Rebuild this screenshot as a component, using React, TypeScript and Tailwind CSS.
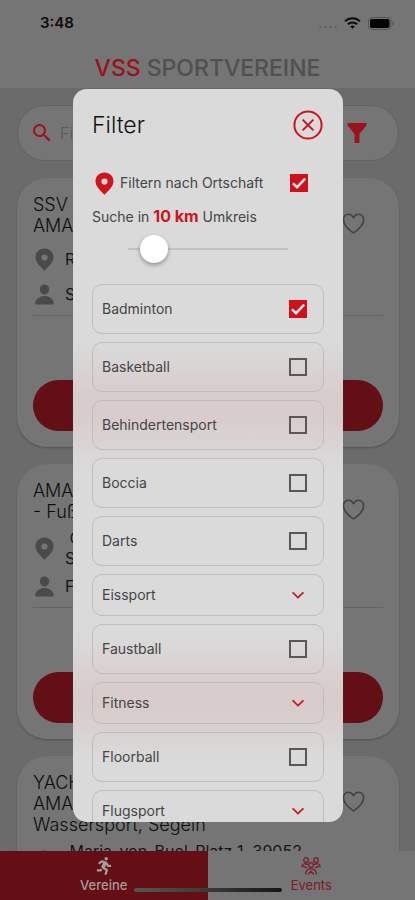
import React, { useState } from "react";
import { MdSearch } from "react-icons/md";
import { IoPerson, IoHeartOutline } from "react-icons/io5";
import { FaRunning } from "react-icons/fa";

type Club = {
  title: string[];
  address: string[];
  person: string;
};

type Sport = { name: string; group?: boolean; checked?: boolean };

const clubs: Club[] = [
  { title: ["SSV", "AMAT"], address: ["R"], person: "S" },
  { title: ["AMAT", "- Fuß"], address: ["\u00a0G", "S"], person: "F" },
  {
    title: ["YACH", "AMAT", "Wassersport, Segeln"],
    address: ["\u00a0Maria-von-Buol-Platz 1, 39052", "K"],
    person: "P",
  },
];

const sports: Sport[] = [
  { name: "Badminton", checked: true },
  { name: "Basketball" },
  { name: "Behindertensport" },
  { name: "Boccia" },
  { name: "Darts" },
  { name: "Eissport", group: true },
  { name: "Faustball" },
  { name: "Fitness", group: true },
  { name: "Floorball" },
  { name: "Flugsport", group: true },
];

function Pin({ className }: { className: string }) {
  return (
    <svg viewBox="0 0 19 23" className={`h-[23px] w-[19px] shrink-0 ${className}`}>
      <path
        fillRule="evenodd"
        d="M9.5 0.5 C4.4 0.5 0.5 4.3 0.5 9.3 C0.5 14.2 4.8 18.2 9.5 22.7 C14.2 18.2 18.5 14.2 18.5 9.3 C18.5 4.3 14.6 0.5 9.5 0.5 Z M9.5 6.4 A3.1 3.1 0 1 1 9.5 12.6 A3.1 3.1 0 1 1 9.5 6.4 Z"
      />
    </svg>
  );
}

function Tick({ id, defaultChecked }: { id: string; defaultChecked?: boolean }) {
  return (
    <span className="grid size-[18px] shrink-0">
      <input
        id={id}
        type="checkbox"
        defaultChecked={defaultChecked}
        className="peer col-start-1 row-start-1 size-[18px] appearance-none border-2 border-[#5a5757] checked:border-[#cf111b] checked:bg-[#cf111b]"
      />
      <svg
        viewBox="0 0 18 18"
        className="pointer-events-none invisible col-start-1 row-start-1 size-[18px] peer-checked:visible"
        fill="none"
        stroke="#f4e9e9"
        strokeWidth="2.4"
      >
        <path d="M3 9.4 L7 13.2 L15.2 4.6" />
      </svg>
    </span>
  );
}

function StatusBar() {
  return (
    <div className="flex h-[46px] items-center justify-between pr-5 pl-10 text-[#0c0c0c]">
      <span className="text-[15px] font-semibold">3:48</span>
      <div className="flex items-center">
        <svg viewBox="0 0 20 4" className="mt-2 h-1 w-5 fill-[#5e5e5e]">
          <circle cx="2.5" cy="2" r="1.2" />
          <circle cx="7.5" cy="2" r="1.2" />
          <circle cx="12.5" cy="2" r="1.2" />
          <circle cx="17.5" cy="2" r="1.2" />
        </svg>
        <svg viewBox="0 0 17 12" className="ml-1.5 h-3 w-[17px]" fill="none" stroke="currentColor" strokeWidth="2">
          <path d="M1 4.4 C5.2 0.3 11.8 0.3 16 4.4" />
          <path d="M3.8 7.3 C6.5 4.8 10.5 4.8 13.2 7.3" />
          <path d="M8.5 11.8 L6.2 9.4 C7.5 8.2 9.5 8.2 10.8 9.4 Z" fill="currentColor" stroke="none" />
        </svg>
        <svg viewBox="0 0 27 13" className="ml-[7px] h-[13px] w-[27px]">
          <rect x="0.5" y="0.5" width="22.5" height="12" rx="3.5" fill="none" stroke="#555" />
          <rect x="2" y="2" width="19.5" height="9" rx="2" fill="#050505" />
          <path d="M24.5 4.2 C26.6 5 26.6 8 24.5 8.8 Z" fill="#555" />
        </svg>
      </div>
    </div>
  );
}

function ClubCard({ club }: { club: Club }) {
  return (
    <article className="shrink-0 rounded-[30px] bg-[#757575] p-4 shadow-[0_1px_2px_rgba(0,0,0,0.25)]">
      <div className="flex items-start justify-between">
        <h2 className="text-lg leading-[21px] font-light whitespace-nowrap text-[#0d0d0d]">
          {club.title.map((line) => (
            <span key={line} className="block">
              {line}
            </span>
          ))}
        </h2>
        <button type="button" aria-label="Favorit" className="mt-4 mr-4 h-[26px]">
          <IoHeartOutline className="size-[27px] text-[#434343]" />
        </button>
      </div>
      <div className="mt-1.5 flex min-h-[34px] items-center text-base leading-5 text-[#151515]">
        <Pin className="ml-0.5 fill-[#4a4a4a]" />
        <p className="ml-[11px] whitespace-nowrap">
          {club.address.map((line) => (
            <span key={line} className="block">
              {line}
            </span>
          ))}
        </p>
      </div>
      <div className="mt-1.5 flex h-6 items-center text-base leading-5 text-[#151515]">
        <IoPerson className="size-[23px] shrink-0 text-[#4a4a4a]" />
        <p className="ml-[9px]">{club.person}</p>
      </div>
      <hr className="mt-[9px] border-[#646464]" />
      <button
        type="button"
        aria-label="Details"
        className="mt-16 block h-[51px] w-full rounded-full bg-[#640f16]"
      />
    </article>
  );
}

function SportRow({ sport }: { sport: Sport }) {
  const frame = "flex w-full shrink-0 items-center justify-between rounded-[10px] border border-[#bdbdbd] pl-[9px] pr-4";
  if (sport.group) {
    return (
      <button type="button" className={`${frame} h-[42px]`}>
        <span>{sport.name}</span>
        <svg viewBox="0 0 18 18" className="size-[18px]" fill="none" stroke="#d0131d" strokeWidth="1.8">
          <path d="M3.6 6.4 L9 11.6 L14.4 6.4" />
        </svg>
      </button>
    );
  }
  return (
    <label htmlFor={sport.name} className={`${frame} h-[50px]`}>
      <span>{sport.name}</span>
      <Tick id={sport.name} defaultChecked={sport.checked} />
    </label>
  );
}

function FilterDialog() {
  const [radius, setRadius] = useState(9);
  return (
    <div
      role="dialog"
      aria-label="Filter"
      className="flex h-full w-full flex-col overflow-hidden rounded-[14px] bg-[#dadada] bg-[linear-gradient(to_bottom,#dadada_255px,#d8cdcd_303px,#d8cbcb_325px,#dadada_378px,#dadada_548px,#d8cdcd_596px,#d8cbcb_618px,#dadada_670px)] px-[19px] pt-[21px] text-sm text-[#454545]"
    >
      <div className="flex h-[30px] shrink-0 items-center justify-between pr-px">
        <h2 className="text-[23px] leading-[30px] font-light text-[#111]">Filter</h2>
        <button type="button" aria-label="Schließen">
          <svg viewBox="0 0 30 30" className="size-[30px]" fill="none" stroke="#d0131d" strokeWidth="2">
            <circle cx="15" cy="15" r="13.6" />
            <path d="M9.6 9.6 L20.4 20.4 M20.4 9.6 L9.6 20.4" />
          </svg>
        </button>
      </div>
      <label htmlFor="ort" className="mt-8 flex h-[22px] shrink-0 items-center pr-4 pl-[3px]">
        <Pin className="fill-[#d0131d]" />
        <span className="ml-[6px] flex-1 whitespace-nowrap">Filtern nach Ortschaft</span>
        <Tick id="ort" defaultChecked />
      </label>
      <label htmlFor="radius" className="mt-3 shrink-0 leading-5 whitespace-nowrap">
        Suche in <strong className="text-base leading-5 font-bold text-[#d0131d]">10 km</strong> Umkreis
      </label>
      <input
        id="radius"
        type="range"
        min={0}
        max={100}
        value={radius}
        onChange={(e) => setRadius(Number(e.target.value))}
        className="mx-9 mt-2 h-7 shrink-0 appearance-none bg-transparent [&::-webkit-slider-runnable-track]:h-0.5 [&::-webkit-slider-runnable-track]:rounded-full [&::-webkit-slider-runnable-track]:bg-[#c2c2c2] [&::-webkit-slider-thumb]:-mt-[13px] [&::-webkit-slider-thumb]:size-7 [&::-webkit-slider-thumb]:appearance-none [&::-webkit-slider-thumb]:rounded-full [&::-webkit-slider-thumb]:bg-white [&::-webkit-slider-thumb]:shadow-[0_2px_4px_rgba(0,0,0,0.35)]"
      />
      <div className="mt-[21px] flex min-h-0 flex-1 flex-col gap-2 overflow-hidden">
        {sports.map((s) => (
          <SportRow key={s.name} sport={s} />
        ))}
      </div>
    </div>
  );
}

function PeopleIcon() {
  return (
    <svg viewBox="0 0 20 18" className="h-[18px] w-5" fill="none" stroke="currentColor" strokeWidth="1.3" strokeLinecap="round">
      <circle cx="5" cy="3" r="2.3" />
      <circle cx="15" cy="3" r="2.3" />
      <circle cx="10" cy="8" r="2.4" />
      <path d="M0.8 9.8 C1.2 7 3.4 6 6.4 7.4" />
      <path d="M19.2 9.8 C18.8 7 16.6 6 13.6 7.4" />
      <path d="M2.4 9.4 L5.6 10.6 M17.6 9.4 L14.4 10.6" />
      <path d="M4.6 17 C5 13 7 11.8 10 11.8 C13 11.8 15 13 15.4 17" />
      <path d="M7.4 17 L10 14.4 L12.6 17" />
    </svg>
  );
}

export default function App() {
  return (
    <div className="relative flex h-screen flex-col overflow-hidden bg-[#6b6b6b] font-['Inter','Liberation_Sans',sans-serif]">
      <header className="h-[88px] shrink-0 bg-[#757575]">
        <StatusBar />
        <h1 className="text-center text-[23px] leading-[44px] font-medium text-[#505050]">
          <span className="text-[#9a121b]">VSS</span> SPORTVEREINE
        </h1>
      </header>

      <main className="flex min-h-0 flex-1 flex-col gap-[17px] overflow-hidden pt-[17px] pr-4 pl-[17px]">
        <div className="flex h-14 shrink-0 items-center rounded-full border border-[#636363] bg-[#757575] pr-[31px] pl-3">
          <MdSearch className="size-6 shrink-0 text-[#9a121b]" />
          <input
            type="search"
            aria-label="Suche"
            placeholder="Fi"
            className="ml-1.5 min-w-0 flex-1 bg-transparent text-base font-light placeholder:text-[#5a5a5a]"
          />
          <button type="button" aria-label="Filter">
            <svg viewBox="0 0 20 20" className="size-5 fill-[#9a121b]">
              <path d="M0.6 0 H19.4 V2.4 L12.4 11 V20 H7.6 V11 L0.6 2.4 Z" />
            </svg>
          </button>
        </div>
        {clubs.map((c) => (
          <ClubCard key={c.title[0]} club={c} />
        ))}
      </main>

      <nav className="grid h-[49px] shrink-0 grid-cols-2 bg-[#757575] text-[13px] leading-4 font-medium">
        <a href="#vereine" className="flex flex-col items-center bg-[#640f16] pt-1.5 text-[#a79c9c]">
          <FaRunning className="size-[18px]" />
          <span className="mt-0.5">Vereine</span>
        </a>
        <a href="#events" className="flex flex-col items-center pt-1.5 font-normal text-[#7d1a26]">
          <PeopleIcon />
          <span className="mt-0.5">Events</span>
        </a>
      </nav>

      <div className="absolute inset-x-0 bottom-2 flex justify-center">
        <div className="h-1 w-[148px] rounded-full bg-gradient-to-r from-[#595454] via-[#3a3a3a] to-[#151515]" />
      </div>

      <div className="absolute inset-0 pt-[89px] pr-[72px] pb-[78px] pl-[73px]">
        <FilterDialog />
      </div>
    </div>
  );
}
